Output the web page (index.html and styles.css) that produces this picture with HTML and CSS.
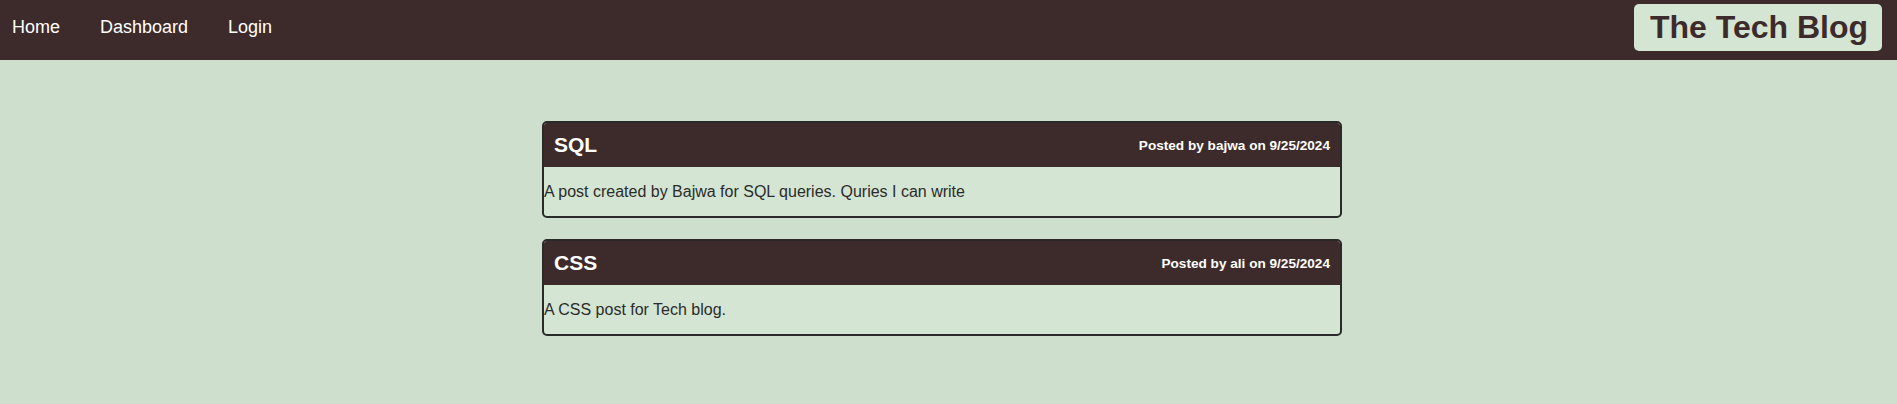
FILE: index.html
```html
<!DOCTYPE html>
<html lang="en">
<head>
<meta charset="utf-8">
<title>The Tech Blog</title>
<link rel="stylesheet" href="styles.css">
</head>
<body>
<header class="topbar">
  <nav class="nav">
    <a class="nav-link" href="#">Home</a>
    <a class="nav-link" href="#">Dashboard</a>
    <a class="nav-link" href="#">Login</a>
  </nav>
  <h1 class="brand">The Tech Blog</h1>
</header>
<main class="posts">
  <article class="post">
    <div class="post-head">
      <h2 class="post-title">SQL</h2>
      <span class="post-meta">Posted by bajwa on 9/25/2024</span>
    </div>
    <p class="post-body">A post created by Bajwa for SQL queries. Quries I can write</p>
  </article>
  <article class="post">
    <div class="post-head">
      <h2 class="post-title">CSS</h2>
      <span class="post-meta">Posted by ali on 9/25/2024</span>
    </div>
    <p class="post-body">A CSS post for Tech blog.</p>
  </article>
</main>
</body>
</html>
```

FILE: styles.css
```css
* { box-sizing: border-box; }

html, body {
  margin: 0;
  padding: 0;
}

body {
  background: #cee0cd;
  font-family: "Liberation Sans", Arial, sans-serif;
  color: #2b2b2b;
  min-height: 404px;
}

.topbar {
  height: 60px;
  background: #3d2b2b;
  display: flex;
  justify-content: space-between;
  align-items: flex-start;
  padding: 0 15px 0 12px;
}

.nav {
  display: flex;
  gap: 40px;
  padding-top: 14px;
}

.nav-link {
  color: #ffffff;
  text-decoration: none;
  font-size: 18px;
  line-height: 26px;
}

.brand {
  margin: 4px 0 0;
  background: #d4e6d3;
  color: #3d2b2b;
  font-size: 32px;
  font-weight: bold;
  line-height: 37px;
  padding: 5px 14px 5px 16px;
  border-radius: 5px;
  width: 248px;
  height: 47px;
  white-space: nowrap;
}

.posts {
  width: 800px;
  margin: 61px 0 0 542px;
  display: flex;
  flex-direction: column;
  gap: 21px;
}

.post {
  border: 2px solid #2a2a2a;
  border-radius: 5px;
  overflow: hidden;
  background: #d4e6d3;
}

.post-head {
  background: #3d2b2b;
  display: flex;
  justify-content: space-between;
  align-items: center;
  height: 44px;
  padding: 0 10px;
}

.post-title {
  margin: 0;
  color: #ffffff;
  font-size: 21px;
  font-weight: bold;
  line-height: 24px;
}

.post-meta {
  color: #ffffff;
  font-size: 13.6px;
  font-weight: bold;
  line-height: 16px;
  padding-top: 2px;
}

.post-body {
  margin: 0;
  padding: 15px 0;
  font-size: 16px;
  line-height: 19px;
  color: #2b2b2b;
}
```
